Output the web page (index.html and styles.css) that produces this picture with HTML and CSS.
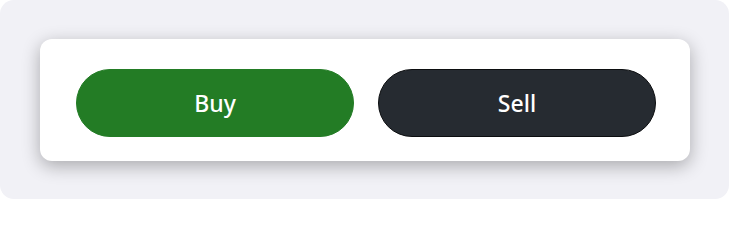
FILE: index.html
```html
<!DOCTYPE html>
<html lang="en">
<head>
<meta charset="utf-8">
<title>Buy / Sell</title>
<link rel="stylesheet" href="styles.css">
</head>
<body>
<div class="stage">
  <div class="card">
    <button class="btn btn-buy" type="button">Buy</button>
    <button class="btn btn-sell" type="button">Sell</button>
  </div>
</div>
</body>
</html>
```

FILE: styles.css
```css
html, body {
  margin: 0;
  padding: 0;
  background: #ffffff;
}
body {
  font-family: "Noto Sans", "Open Sans", sans-serif;
}
.stage {
  width: 729px;
  height: 199px;
  box-sizing: border-box;
  background: #f1f1f6;
  border-radius: 14px;
  padding: 39px 0 0 40px;
}
.card {
  width: 650px;
  height: 122px;
  box-sizing: border-box;
  background: #ffffff;
  border-radius: 12px;
  box-shadow: 0 5px 18px rgba(0, 0, 0, 0.3);
  padding: 30px 34px 24px 36px;
  display: flex;
  gap: 24px;
}
.btn {
  width: 278px;
  height: 68px;
  border-radius: 34px;
  box-sizing: border-box;
  font-family: "Noto Sans", "Open Sans", sans-serif;
  font-size: 23px;
  font-weight: 500;
  color: #ffffff;
  padding: 0;
  cursor: pointer;
}
.btn-buy {
  background: #237c25;
  border: 1px solid #237c25;
}
.btn-sell {
  background: #262b31;
  border: 1px solid #0c0e10;
}
```
